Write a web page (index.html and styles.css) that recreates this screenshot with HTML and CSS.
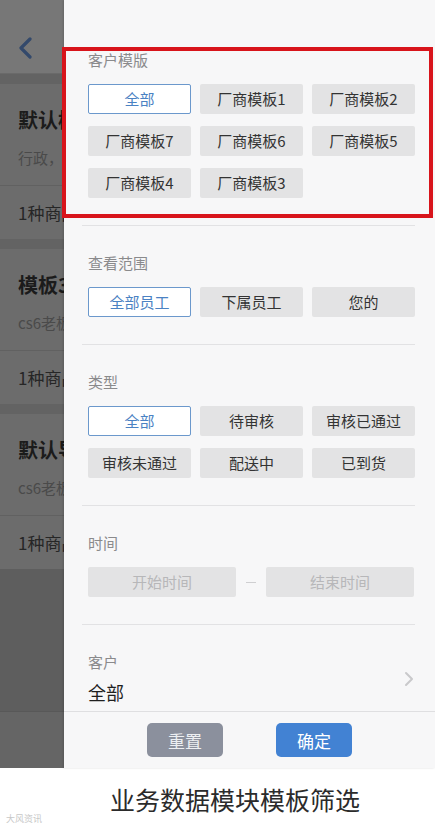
FILE: index.html
```html
<!DOCTYPE html>
<html lang="zh-CN">

<head>
    <meta charset="UTF-8">
    <meta name="viewport" content="width=device-width, initial-scale=1.0">
    <title>业务数据模块模板筛选</title>

    <link rel="stylesheet" href="styles.css">
</head>

<body>
    <div class="screen">
        <!-- List page behind the drawer -->
        <aside class="behind">
            <div class="nav">
                <svg class="back" width="16" height="22" viewBox="0 0 16 22">
                    <path d="M12 2 L3 11 L12 20" fill="none" stroke="#33496b" stroke-width="3.2" stroke-linecap="round" stroke-linejoin="round" />
                </svg>
            </div>
            <div class="gap"></div>
            <div class="card">
                <div class="card-head">
                    <div class="card-title">默认模板</div>
                    <div class="card-sub">行政，财务</div>
                </div>
                <div class="card-foot">1种商品</div>
            </div>
            <div class="gap"></div>
            <div class="card">
                <div class="card-head">
                    <div class="card-title">模板3</div>
                    <div class="card-sub">cs6老板</div>
                </div>
                <div class="card-foot">1种商品</div>
            </div>
            <div class="gap"></div>
            <div class="card">
                <div class="card-head">
                    <div class="card-title">默认导入</div>
                    <div class="card-sub">cs6老板</div>
                </div>
                <div class="card-foot">1种商品</div>
            </div>
            <div class="rest"></div>
            <div class="tabbar"></div>
        </aside>

        <!-- Filter drawer -->
        <section class="filter">
            <div class="filter-body">
                <div class="group">
                    <div class="group-title">客户模版</div>
                    <div class="opts">
                        <div class="opt on">全部</div>
                        <div class="opt">厂商模板1</div>
                        <div class="opt">厂商模板2</div>
                        <div class="opt">厂商模板7</div>
                        <div class="opt">厂商模板6</div>
                        <div class="opt">厂商模板5</div>
                        <div class="opt">厂商模板4</div>
                        <div class="opt">厂商模板3</div>
                    </div>
                </div>
                <div class="divider"></div>

                <div class="group">
                    <div class="group-title">查看范围</div>
                    <div class="opts">
                        <div class="opt on">全部员工</div>
                        <div class="opt">下属员工</div>
                        <div class="opt">您的</div>
                    </div>
                </div>
                <div class="divider"></div>

                <div class="group">
                    <div class="group-title">类型</div>
                    <div class="opts">
                        <div class="opt on">全部</div>
                        <div class="opt">待审核</div>
                        <div class="opt">审核已通过</div>
                        <div class="opt">审核未通过</div>
                        <div class="opt">配送中</div>
                        <div class="opt">已到货</div>
                    </div>
                </div>
                <div class="divider"></div>

                <div class="group">
                    <div class="group-title">时间</div>
                    <div class="time-row">
                        <div class="time-box">开始时间</div>
                        <div class="time-dash"></div>
                        <div class="time-box">结束时间</div>
                    </div>
                </div>
                <div class="divider"></div>

                <div class="group customer">
                    <div>
                        <div class="group-title">客户</div>
                        <div class="customer-value">全部</div>
                    </div>
                    <svg class="arrow" width="10" height="16" viewBox="0 0 10 16">
                        <path d="M2 2 L8 8 L2 14" fill="none" stroke="#c9c9cb" stroke-width="2" stroke-linecap="round" stroke-linejoin="round" />
                    </svg>
                </div>
            </div>

            <div class="filter-foot">
                <button class="btn reset">重置</button>
                <button class="btn ok">确定</button>
            </div>
        </section>

        <!-- highlight frame drawn on the screenshot -->
        <div class="mark"></div>
    </div>

    <div class="caption">
        业务数据模块模板筛选
        <span class="watermark">大风资讯</span>
    </div>
</body>

</html>
```

FILE: styles.css
```css
* {
    box-sizing: border-box;
    margin: 0;
    padding: 0;
}

body {
    font-family: "Noto Sans CJK SC", "Noto Sans", sans-serif;
    width: 435px;
    background: #fff;
}

.screen {
    position: relative;
    display: flex;
    height: 768px;
}

/* list page, dimmed */
.behind {
    width: 64px;
    flex: none;
    overflow: hidden;
    display: flex;
    flex-direction: column;
    background: #5e5e5e;
}

.behind > * {
    flex: none;
}

.nav {
    height: 74px;
    background: #777;
    border-bottom: 1px solid #6a6a6a;
    padding: 37px 0 0 18px;
}

.gap {
    height: 10px;
    background: #636363;
}

.card {
    background: #6c6c6c;
}

.card-head {
    height: 102px;
    padding: 23px 0 0 18px;
    border-bottom: 1px solid #616161;
}

.card-title,
.card-sub,
.card-foot {
    white-space: nowrap;
    overflow: hidden;
}

.card-title {
    font-size: 20px;
    font-weight: bold;
    line-height: 26px;
    color: #1b1b1b;
}

.card-sub {
    margin-top: 12px;
    font-size: 15px;
    line-height: 26px;
    color: #4a4a4a;
}

.card-foot {
    height: 53px;
    padding-left: 18px;
    line-height: 53px;
    font-size: 17px;
    color: #262626;
}

.rest {
    flex: 1 !important;
    background: #5e5e5e;
}

.tabbar {
    height: 57px;
    background: #656565;
    border-top: 1px solid #585858;
}

/* filter drawer */
.filter {
    flex: 1;
    display: flex;
    flex-direction: column;
    background: #f7f7f8;
    box-shadow: -1px 0 2px rgba(0, 0, 0, 0.15);
}

.filter-body {
    flex: 1;
    padding-top: 23px;
}

.group {
    padding: 27px 20px 27px 24px;
}

.group-title {
    font-size: 15px;
    line-height: 20px;
    color: #8a8a8c;
    margin-bottom: 14px;
}

.opts {
    display: grid;
    grid-template-columns: repeat(3, 103px);
    gap: 12px 9px;
}

.opt {
    height: 30px;
    line-height: 30px;
    text-align: center;
    background: #e3e3e4;
    border-radius: 2px;
    font-size: 15px;
    color: #333;
}

.opt.on {
    background: #fff;
    border: 1px solid #6b98cc;
    line-height: 28px;
    color: #4b82c3;
}

.divider {
    height: 1px;
    background: #e2e2e4;
    margin: 0 20px 0 18px;
}

.time-row {
    display: flex;
    align-items: center;
}

.time-box {
    width: 148px;
    height: 30px;
    line-height: 30px;
    text-align: center;
    background: #e3e3e4;
    border-radius: 2px;
    font-size: 15px;
    color: #b7b7b9;
}

.time-dash {
    width: 10px;
    height: 1px;
    margin: 0 10px;
    background: #cfcfd1;
}

.customer {
    display: flex;
    justify-content: space-between;
    align-items: center;
    padding-bottom: 3px;
}

.customer .group-title {
    margin-bottom: 7px;
}

.customer-value {
    font-size: 18px;
    line-height: 26px;
    color: #1f1f1f;
}

.arrow {
    margin-right: 1px;
}

.filter-foot {
    height: 57px;
    border-top: 1px solid #dfdfe1;
    display: flex;
    align-items: center;
    justify-content: center;
    gap: 53px;
}

.btn {
    width: 76px;
    height: 34px;
    border: none;
    border-radius: 5px;
    font-family: inherit;
    font-size: 17px;
    color: #fff;
}

.btn.reset {
    background: #8b909d;
    color: #eceef2;
}

.btn.ok {
    background: #4282d3;
}

.mark {
    position: absolute;
    left: 62px;
    top: 47px;
    width: 371px;
    height: 171px;
    border: 4px solid #d8141b;
}

/* caption under the screenshot */
.caption {
    position: relative;
    height: 61px;
    display: flex;
    align-items: center;
    justify-content: center;
    padding-left: 35px;
    font-size: 25px;
    color: #2b2b2b;
}

.watermark {
    position: absolute;
    left: 6px;
    bottom: 4px;
    font-size: 9px;
    color: #c8c8c8;
}
```
